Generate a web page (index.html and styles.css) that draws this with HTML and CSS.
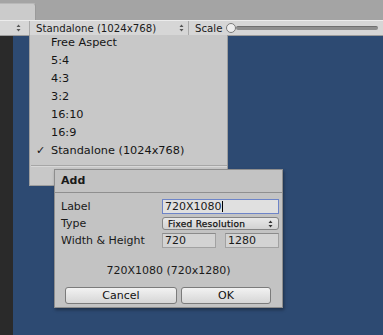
FILE: index.html
```html
<!DOCTYPE html>
<html lang="en">
<head>
  <meta charset="UTF-8" />
  <title>Game View Resolution</title>
  <link rel="stylesheet" href="styles.css">
</head>
<body>
  <div class="tabbar">
    <div class="tab"></div>
  </div>

  <div class="toolbar">
    <div class="dd dd-left">
      <svg class="arrows" width="5" height="8" viewBox="0 0 5 8"><path d="M2.5 0.5 L4.5 3 L0.5 3 Z M0.5 5 L4.5 5 L2.5 7.5 Z" fill="#555"/></svg>
    </div>
    <div class="dd dd-main">Standalone (1024x768)
      <svg class="arrows" width="5" height="8" viewBox="0 0 5 8"><path d="M2.5 0.5 L4.5 3 L0.5 3 Z M0.5 5 L4.5 5 L2.5 7.5 Z" fill="#555"/></svg>
    </div>
    <div class="scale">
      <span>Scale</span>
      <div class="slider"><div class="knob"></div><div class="track"></div></div>
    </div>
  </div>

  <div class="viewport">
    <div class="dark-strip"></div>
    <div class="scene"></div>
  </div>

  <div class="menu">
    <div class="menu-item">Free Aspect</div>
    <div class="menu-item">5:4</div>
    <div class="menu-item">4:3</div>
    <div class="menu-item">3:2</div>
    <div class="menu-item">16:10</div>
    <div class="menu-item">16:9</div>
    <div class="menu-item checked"><span class="check">&#10003;</span>Standalone (1024x768)</div>
    <div class="menu-sep"></div>
  </div>

  <div class="dialog">
    <div class="dialog-title">Add</div>
    <div class="dialog-body">
      <div class="form">
        <label class="row-label">Label</label>
        <div class="field focused">720X1080<span class="caret"></span></div>
        <label class="row-label">Type</label>
        <div class="select">Fixed Resolution
          <svg class="arrows" width="5" height="8" viewBox="0 0 5 8"><path d="M2.5 0.5 L4.5 3 L0.5 3 Z M0.5 5 L4.5 5 L2.5 7.5 Z" fill="#333"/></svg>
        </div>
        <label class="row-label">Width &amp; Height</label>
        <div class="pair">
          <div class="field">720</div>
          <div class="field">1280</div>
        </div>
      </div>
      <div class="summary">720X1080 (720x1280)</div>
      <div class="buttons">
        <button class="btn btn-cancel">Cancel</button>
        <button class="btn btn-ok">OK</button>
      </div>
    </div>
  </div>
</body>
</html>
```

FILE: styles.css
```css
body {
  margin: 0;
  width: 383px;
  height: 335px;
  overflow: hidden;
  position: relative;
  font-family: "DejaVu Sans", sans-serif;
  font-size: 11px;
  color: #1a1a1a;
  background-color: #a4a4a4;
  display: flex;
  flex-direction: column;
}

.tabbar {
  height: 20px;
  display: flex;
  align-items: flex-end;
}

.tab {
  width: 36px;
  height: 17px;
  background-color: #cbcbcb;
  border-right: 1px solid #9a9a9a;
  border-top: 1px solid #b8b8b8;
  border-top-right-radius: 3px;
  box-sizing: border-box;
}

.toolbar {
  height: 16px;
  box-sizing: border-box;
  background-color: #d6d6d6;
  border-top: 1px solid #ececec;
  border-bottom: 1px solid #9c9c9c;
  display: flex;
  align-items: center;
  font-size: 10.2px;
}

.dd {
  height: 100%;
  display: flex;
  align-items: center;
  border-right: 1px solid #a9a9a9;
  box-sizing: border-box;
  position: relative;
}

.dd-left {
  width: 30px;
}

.dd-main {
  width: 159px;
  padding-left: 6px;
}

.arrows {
  position: absolute;
  top: 50%;
  margin-top: -4px;
}

.dd-left .arrows { left: 16px; }
.dd-main .arrows { right: 4px; }

.scale {
  flex: 1;
  display: flex;
  align-items: center;
  padding-left: 6px;
  gap: 4px;
}

.slider {
  flex: 1;
  display: flex;
  align-items: center;
  margin-right: 5px;
}

.knob {
  width: 8px;
  height: 8px;
  border-radius: 50%;
  background-color: #ededed;
  border: 1px solid #7a7a7a;
  flex-shrink: 0;
}

.track {
  flex: 1;
  height: 3px;
  background-color: #8e8e8e;
  border-top: 1px solid #6f6f6f;
  border-radius: 2px;
}

.viewport {
  flex: 1;
  display: flex;
}

.dark-strip {
  width: 13px;
  background-color: #2a2a2a;
}

.scene {
  flex: 1;
  background-color: #2d4a72;
}

/* popup menu */
.menu {
  position: absolute;
  left: 29px;
  top: 35px;
  width: 199px;
  height: 151px;
  box-sizing: border-box;
  background-color: #c8c8c8;
  border: 1px solid #9e9e9e;
  border-top: none;
}

.menu-item {
  height: 18px;
  line-height: 16px;
  padding-left: 21px;
  position: relative;
  font-size: 11.3px;
  color: #151515;
}

.check {
  position: absolute;
  left: 6px;
  font-size: 11px;
}

.menu-sep {
  margin: 4px 0 0 1px;
  height: 1px;
  background-color: #a6a6a6;
  border-bottom: 1px solid #d8d8d8;
}

/* add dialog */
.dialog {
  position: absolute;
  left: 54px;
  top: 169px;
  width: 229px;
  height: 139px;
  box-sizing: border-box;
  background-color: #c3c3c3;
  border: 1px solid #8e8e8e;
  box-shadow: 1px 2px 3px rgba(0, 0, 0, 0.35);
  display: flex;
  flex-direction: column;
}

.dialog-title {
  height: 22px;
  line-height: 21px;
  padding-left: 6px;
  font-weight: bold;
  border-bottom: 1px solid #8f8f8f;
}

.dialog-body {
  padding: 6px 3px 0 6px;
  display: flex;
  flex-direction: column;
}

.form {
  display: grid;
  grid-template-columns: 101px 1fr;
  grid-template-rows: 15px 13px 15px;
  row-gap: 3px;
  align-items: center;
}

.row-label {
  line-height: 15px;
}

.field {
  height: 15px;
  line-height: 14px;
  box-sizing: border-box;
  background-color: #d3d3d3;
  border: 1px solid #a2a2a2;
  border-top-color: #8b8b8b;
  padding-left: 2px;
}

.field.focused {
  background-color: #e0e0e0;
  border: 1px solid #6d84c8;
}

.caret {
  display: inline-block;
  width: 1px;
  height: 11px;
  background-color: #000;
  vertical-align: -2px;
}

.select {
  height: 13px;
  line-height: 12px;
  box-sizing: border-box;
  border: 1px solid #858585;
  border-radius: 3px;
  background: linear-gradient(#e8e8e8, #d2d2d2);
  font-size: 9px;
  letter-spacing: 0.25px;
  -webkit-text-stroke: 0.25px #111;
  color: #111;
  padding-left: 5px;
  position: relative;
}

.select .arrows {
  right: 5px;
}

.pair {
  display: flex;
  justify-content: space-between;
}

.pair .field {
  width: 54px;
}

.summary {
  text-align: center;
  margin-top: 15px;
  height: 15px;
  line-height: 15px;
  padding-right: 3px;
}

.buttons {
  display: flex;
  gap: 4px;
  margin-top: 9px;
  padding-left: 4px;
}

.btn {
  height: 17px;
  font-family: "DejaVu Sans", sans-serif;
  font-size: 11px;
  color: #111;
  background: linear-gradient(#f2f2f2, #d6d6d6);
  border: 1px solid #7b7b7b;
  border-radius: 3px;
  padding: 0;
}

.btn-cancel { width: 112px; }
.btn-ok { width: 90px; }
```
